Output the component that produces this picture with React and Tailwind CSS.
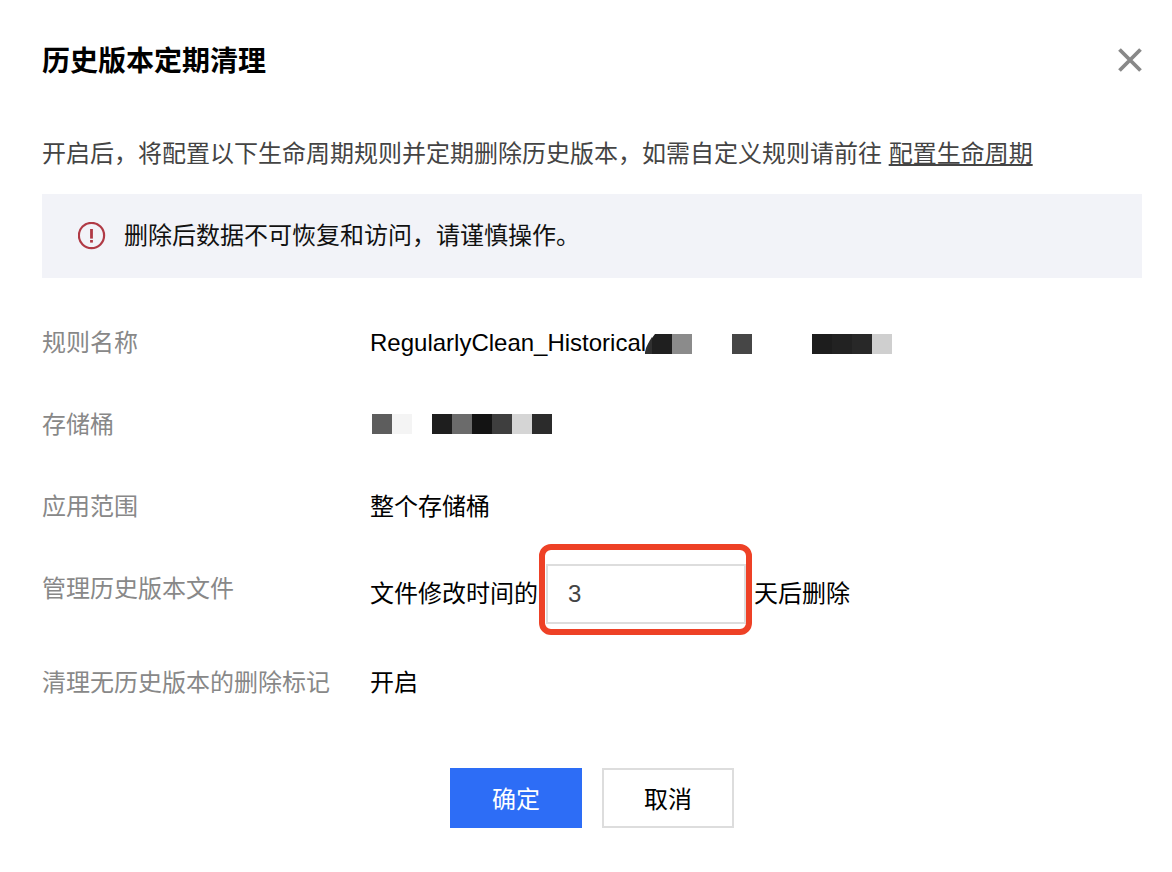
import { useState } from 'react';

function CloseIcon() {
  return (
    <svg width="24" height="24" viewBox="0 0 24 24" fill="none" stroke="#888888" strokeWidth="3.8" aria-hidden="true">
      <path d="M1.5 1.5 22.5 22.5M22.5 1.5 1.5 22.5" />
    </svg>
  );
}

function AlertIcon() {
  return (
    <svg className="shrink-0" width="28" height="28" viewBox="0 0 28 28" fill="none" aria-hidden="true">
      <circle cx="13.5" cy="13.5" r="12.6" stroke="#b03a45" strokeWidth="2.2" />
      <rect x="12.1" y="7" width="2.8" height="9.6" fill="#b03a45" />
      <rect x="12.1" y="18" width="2.8" height="2.6" fill="#b03a45" />
    </svg>
  );
}

function NameMask() {
  return (
    <svg className="absolute top-[9px] left-[274px]" width="250" height="20" viewBox="0 0 250 20" aria-hidden="true">
      <path d="M8 3C5 8 2 12 1 18V20H8Z" fill="#303030" />
      <path d="M11 0H28V20H8V4Z" fill="#1f1f1f" />
      <rect x="28" width="20" height="20" fill="#8b8b8b" />
      <rect x="88" width="20" height="20" fill="#464646" />
      <rect x="168" width="20" height="20" fill="#1d1d1d" />
      <rect x="188" width="20" height="20" fill="#222222" />
      <rect x="208" width="20" height="20" fill="#282828" />
      <rect x="228" width="20" height="20" fill="#cfcfcf" />
    </svg>
  );
}

function BucketMask() {
  return (
    <svg className="ml-0.5" width="180" height="20" viewBox="0 0 180 20" role="img" aria-label="存储桶">
      <rect width="20" height="20" fill="#5d5d5d" />
      <rect x="20" width="20" height="20" fill="#f4f4f4" />
      <rect x="60" width="20" height="20" fill="#1e1e1e" />
      <rect x="80" width="20" height="20" fill="#6b6b6b" />
      <rect x="100" width="20" height="20" fill="#131313" />
      <rect x="120" width="20" height="20" fill="#3e3e3e" />
      <rect x="140" width="20" height="20" fill="#d5d5d5" />
      <rect x="160" width="20" height="20" fill="#2b2b2b" />
    </svg>
  );
}

function Row({ label, htmlFor, children }) {
  return (
    <div className="grid grid-cols-[328px_1fr]">
      {htmlFor ? (
        <label htmlFor={htmlFor} className="py-[23px] text-[#888888]">{label}</label>
      ) : (
        <div className="py-[23px] text-[#888888]">{label}</div>
      )}
      {children}
    </div>
  );
}

export default function App() {
  const [days, setDays] = useState('3');

  return (
    <main
      role="dialog"
      aria-labelledby="dialog-title"
      className="bg-white pt-10 pr-[30px] pb-11 pl-[42px] font-['Liberation_Sans','Noto_Sans_CJK_SC',sans-serif] text-[24px] leading-9 text-black"
    >
      <header className="flex items-center justify-between">
        <h1 id="dialog-title" className="pt-1 text-[28px] leading-9 font-bold">历史版本定期清理</h1>
        <button type="button" aria-label="关闭">
          <CloseIcon />
        </button>
      </header>

      <p className="mt-14 text-[#444444]">
        开启后，将配置以下生命周期规则并定期删除历史版本，如需自定义规则请前往{' '}
        <a href="#lifecycle" className="underline decoration-2 underline-offset-2">配置生命周期</a>
      </p>

      <div role="alert" className="mt-[22px] flex items-center gap-[18px] bg-[#f2f3f8] px-9 py-6 text-[#111111]">
        <AlertIcon />
        <span>删除后数据不可恢复和访问，请谨慎操作。</span>
      </div>

      <div className="mt-6">
        <Row label="规则名称">
          <div className="relative my-[23px]">
            RegularlyClean_Historical
            <NameMask />
          </div>
        </Row>
        <Row label="存储桶">
          <div className="flex items-center pb-0.5">
            <BucketMask />
          </div>
        </Row>
        <Row label="应用范围">
          <div className="py-[23px]">整个存储桶</div>
        </Row>
        <Row label="管理历史版本文件" htmlFor="days">
          <div className="flex items-center gap-2 pt-4 pb-[18px]">
            <span>文件修改时间的</span>
            <div className="relative">
              <input
                id="days"
                type="text"
                inputMode="numeric"
                value={days}
                onChange={(e) => setDays(e.target.value)}
                className="block h-[60px] w-[200px] border-2 border-[#dddddd] bg-white px-5 text-[#444444] outline-none"
              />
              <div className="pointer-events-none absolute -top-5 -right-1.5 -bottom-[11px] -left-[7px] rounded-xl border-6 border-[#ee4126]" />
            </div>
            <span>天后删除</span>
          </div>
        </Row>
        <Row label="清理无历史版本的删除标记">
          <div className="py-[23px]">开启</div>
        </Row>
      </div>

      <footer className="mt-11 flex justify-center gap-5">
        <button type="button" className="h-[60px] w-[132px] bg-[#2d6df6] pt-1 text-white">确定</button>
        <button type="button" className="h-[60px] w-[132px] border-2 border-[#dddddd] bg-white pt-1">取消</button>
      </footer>
    </main>
  );
}
